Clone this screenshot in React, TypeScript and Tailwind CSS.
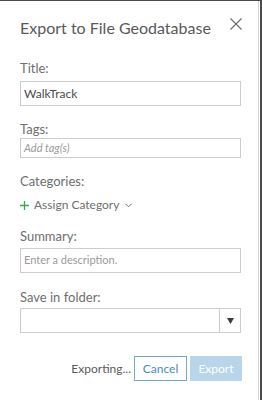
export default function App() {
  return (
    <div
      className="h-[400px] w-[262px] overflow-hidden border-t border-r-2 border-[#4a4a4a] bg-white"
      style={{ fontFamily: "Lato, 'Open Sans', sans-serif" }}
    >
      <div className="flex h-full w-[259px] flex-col border-r border-[#d4d4d4] pl-5 pr-[16px]">
        {/* header */}
        <div className="flex items-start justify-between pt-[16px]">
          <h1 className="text-[16px] leading-[22px] text-[#595959]">
            Export to File Geodatabase
          </h1>
          <svg width="12" height="12" viewBox="0 0 12 12" className="mt-[1px]">
            <path d="M0.5 0.5 L11.5 11.5 M11.5 0.5 L0.5 11.5" stroke="#6b6b6b" strokeWidth="1.1" fill="none" />
          </svg>
        </div>

        <div className="mt-[21px] text-[13px] leading-[16px] text-[#6e6e6e]">Title:</div>
        <div className="mt-[5px] mr-[1px] flex h-[25px] items-center border border-[#cccccc] px-[3px] text-[12px] text-[#4c4c4c]">
          WalkTrack
        </div>

        <div className="mt-[15px] text-[13px] leading-[16px] text-[#6e6e6e]">Tags:</div>
        <div className="mt-[1px] mr-[1px] flex h-[20px] items-center border border-[#cccccc] px-[3px] text-[11px] italic text-[#9a9a9a]">
          Add tag(s)
        </div>

        <div className="mt-[15px] text-[13px] leading-[16px] text-[#6e6e6e]">Categories:</div>
        <div className="mt-[8px] flex items-center gap-[5px] text-[12px] leading-[16px] text-[#6e6e6e]">
          <svg width="9" height="9" viewBox="0 0 9 9">
            <path d="M4.5 0 V9 M0 4.5 H9" stroke="#35ac46" strokeWidth="1.3" />
          </svg>
          <span>Assign Category</span>
          <svg width="7" height="5" viewBox="0 0 7 5" className="ml-[1px]">
            <path d="M0.5 0.8 L3.5 3.8 L6.5 0.8" stroke="#6e6e6e" strokeWidth="1" fill="none" />
          </svg>
        </div>

        <div className="mt-[15px] text-[13px] leading-[16px] text-[#6e6e6e]">Summary:</div>
        <div className="mt-[4px] mr-[1px] flex h-[25px] items-center border border-[#cccccc] px-[3px] text-[11px] text-[#9a9a9a]">
          Enter a description.
        </div>

        <div className="mt-[16px] text-[13px] leading-[16px] text-[#6e6e6e]">Save in folder:</div>
        <div className="mt-[3px] mr-[1px] flex h-[25px] border border-[#cccccc]">
          <div className="flex-1" />
          <div className="flex w-[21px] items-center justify-center border-l border-[#cccccc]">
            <svg width="7" height="6" viewBox="0 0 7 6">
              <path d="M0 0 H7 L3.5 6 Z" fill="#3c3c3c" />
            </svg>
          </div>
        </div>

        <div className="mt-[23px] flex items-center justify-end">
          <span className="mr-[3px] text-[12px] text-[#5a5a5a]">Exporting...</span>
          <div className="flex h-[25px] w-[53px] items-center justify-center border border-[#6fa9d8] text-[12px] text-[#4a8ac6]">
            Cancel
          </div>
          <div className="ml-[3px] flex h-[25px] w-[52px] items-center justify-center bg-[#b9d5ec] text-[12px] text-white">
            Export
          </div>
        </div>
      </div>
    </div>
  );
}
